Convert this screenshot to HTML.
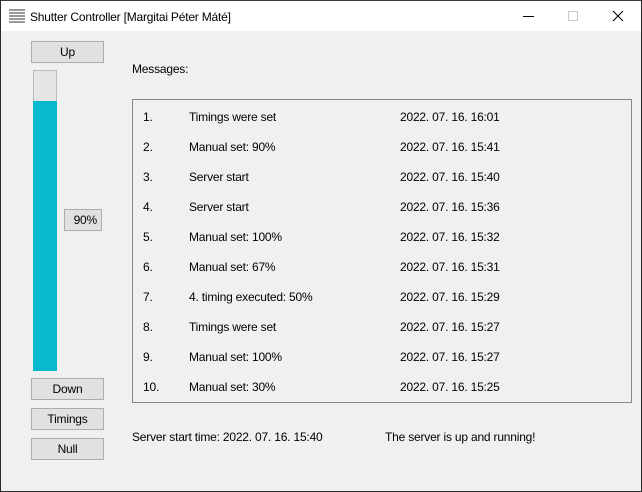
<!DOCTYPE html>
<html><head><style>
*{margin:0;padding:0;box-sizing:border-box}
body{width:642px;height:492px;background:#f0f0f0;font-family:"Liberation Sans",sans-serif;font-size:12px;letter-spacing:-0.2px;color:#000;position:relative;overflow:hidden}
.win{position:absolute;left:0;top:0;width:642px;height:492px;border:1px solid #2b2b2b;border-top-color:#3a3a3a}
.title{position:absolute;left:1px;top:1px;width:640px;height:30px;background:#fff}
.t{position:absolute;white-space:nowrap}
.btn{position:absolute;left:31px;width:73px;height:22px;background:#e1e1e1;border:1px solid #adadad;text-align:center;line-height:21px}
.row{position:absolute;left:0;width:100%}
</style></head><body>
<div class="win"></div>
<div class="title">
 <svg style="position:absolute;left:8px;top:7px" width="16" height="16"><g fill="#9a9a9a"><rect x="0" y="1" width="16" height="2"/><rect x="0" y="4" width="16" height="2"/><rect x="0" y="7" width="16" height="2"/><rect x="0" y="10" width="16" height="2"/><rect x="0" y="13" width="16" height="2"/></g></svg>
 <div class="t" style="left:29px;top:9px">Shutter Controller [Margitai Péter Máté]</div>
 <div style="position:absolute;left:522px;top:15px;width:11px;height:1px;background:#000"></div>
 <div style="position:absolute;left:567px;top:10px;width:10px;height:10px;border:1px solid #c8c8c8"></div>
 <svg style="position:absolute;left:611px;top:9px" width="12" height="12"><path d="M1 1L11 11M11 1L1 11" stroke="#000" stroke-width="1.1"/></svg>
</div>
<div class="btn" style="top:41px">Up</div>
<div style="position:absolute;left:33px;top:70px;width:24px;height:301px;background:#e6e6e6;border:1px solid #bcbcbc"></div>
<div style="position:absolute;left:33px;top:101px;width:24px;height:270px;background:#06b9cf"></div>
<div style="position:absolute;left:64px;top:209px;width:38px;height:22px;background:#e1e1e1;border:1px solid #adadad;text-align:right;padding-right:4px;line-height:21px">90%</div>
<div class="btn" style="top:378px">Down</div>
<div class="btn" style="top:408px">Timings</div>
<div class="btn" style="top:438px">Null</div>
<div class="t" style="left:132px;top:62px">Messages:</div>
<div style="position:absolute;left:132px;top:99px;width:500px;height:304px;border:1px solid #828790">
<div class="row" style="top:10px"><span class="t" style="left:10px">1.</span><span class="t" style="left:56px">Timings were set</span><span class="t" style="left:267px">2022. 07. 16. 16:01</span></div>
<div class="row" style="top:40px"><span class="t" style="left:10px">2.</span><span class="t" style="left:56px">Manual set: 90%</span><span class="t" style="left:267px">2022. 07. 16. 15:41</span></div>
<div class="row" style="top:70px"><span class="t" style="left:10px">3.</span><span class="t" style="left:56px">Server start</span><span class="t" style="left:267px">2022. 07. 16. 15:40</span></div>
<div class="row" style="top:100px"><span class="t" style="left:10px">4.</span><span class="t" style="left:56px">Server start</span><span class="t" style="left:267px">2022. 07. 16. 15:36</span></div>
<div class="row" style="top:130px"><span class="t" style="left:10px">5.</span><span class="t" style="left:56px">Manual set: 100%</span><span class="t" style="left:267px">2022. 07. 16. 15:32</span></div>
<div class="row" style="top:160px"><span class="t" style="left:10px">6.</span><span class="t" style="left:56px">Manual set: 67%</span><span class="t" style="left:267px">2022. 07. 16. 15:31</span></div>
<div class="row" style="top:190px"><span class="t" style="left:10px">7.</span><span class="t" style="left:56px">4. timing executed: 50%</span><span class="t" style="left:267px">2022. 07. 16. 15:29</span></div>
<div class="row" style="top:220px"><span class="t" style="left:10px">8.</span><span class="t" style="left:56px">Timings were set</span><span class="t" style="left:267px">2022. 07. 16. 15:27</span></div>
<div class="row" style="top:250px"><span class="t" style="left:10px">9.</span><span class="t" style="left:56px">Manual set: 100%</span><span class="t" style="left:267px">2022. 07. 16. 15:27</span></div>
<div class="row" style="top:280px"><span class="t" style="left:10px">10.</span><span class="t" style="left:56px">Manual set: 30%</span><span class="t" style="left:267px">2022. 07. 16. 15:25</span></div>
</div>
<div class="t" style="left:132px;top:430px">Server start time: 2022. 07. 16. 15:40</div>
<div class="t" style="left:385px;top:430px">The server is up and running!</div>
</body></html>
